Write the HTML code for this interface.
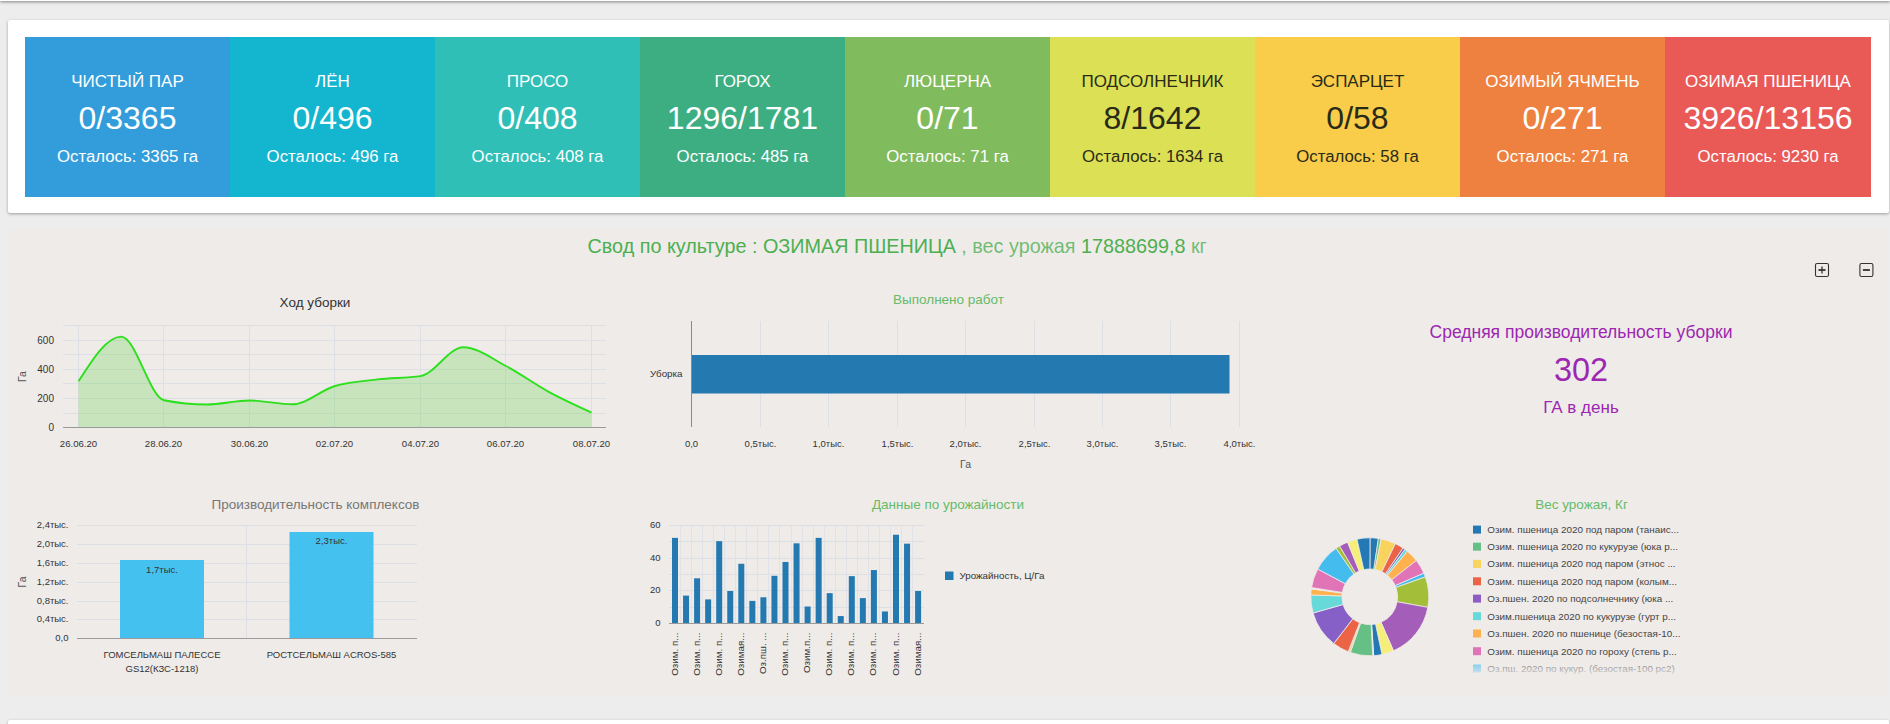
<!DOCTYPE html><html><head><meta charset="utf-8"><title>Dashboard</title><style>
html,body{margin:0;padding:0;}
body{width:1890px;height:724px;overflow:hidden;background:#ededed;position:relative;font-family:'Liberation Sans',sans-serif;}
.topcard{position:absolute;left:0;top:-40px;width:1890px;height:41px;background:#fff;box-shadow:0 1px 3px rgba(0,0,0,.45);}
.card{position:absolute;left:8px;top:20px;width:1881px;height:193px;background:#fff;border-radius:2px;box-shadow:0 1px 3px rgba(0,0,0,.35);}
.tiles{position:absolute;left:25px;top:37px;width:1846px;height:160px;display:flex;}
.tile{flex:0 0 205px;position:relative;color:#fff;text-align:center;}
.tile:last-child{flex-basis:206px;}
.tile div{position:absolute;left:0;right:0;white-space:nowrap;}
.t1{font-size:17px;line-height:17px;top:36px;}
.t2{font-size:32px;line-height:32px;top:65px;}
.t3{font-size:16.8px;line-height:17px;top:111px;}
.panel{position:absolute;left:8px;top:230px;width:1881px;height:467px;background:#efebe9;}
.botcard{position:absolute;left:8px;top:720px;width:1881px;height:60px;background:#fff;border-radius:2px;box-shadow:0 1px 3px rgba(0,0,0,.35);}
svg{position:absolute;left:0;top:0;}
svg text{font-family:'Liberation Sans',sans-serif;}

</style></head><body>
<div class="topcard"></div>
<div class="card"><div class="tiles" style="left:17px;top:17px">
<div class="tile" style="background:#339ddb;color:#fff"><div class="t1">ЧИСТЫЙ ПАР</div><div class="t2">0/3365</div><div class="t3">Осталось: 3365 га</div></div>
<div class="tile" style="background:#13b5cf;color:#fff"><div class="t1">ЛЁН</div><div class="t2">0/496</div><div class="t3">Осталось: 496 га</div></div>
<div class="tile" style="background:#2fbfb7;color:#fff"><div class="t1">ПРОСО</div><div class="t2">0/408</div><div class="t3">Осталось: 408 га</div></div>
<div class="tile" style="background:#3dae82;color:#fff"><div class="t1">ГОРОХ</div><div class="t2">1296/1781</div><div class="t3">Осталось: 485 га</div></div>
<div class="tile" style="background:#80bb5e;color:#fff"><div class="t1">ЛЮЦЕРНА</div><div class="t2">0/71</div><div class="t3">Осталось: 71 га</div></div>
<div class="tile" style="background:#dce054;color:#2a2a18"><div class="t1">ПОДСОЛНЕЧНИК</div><div class="t2">8/1642</div><div class="t3">Осталось: 1634 га</div></div>
<div class="tile" style="background:#f9cd4a;color:#2a2a18"><div class="t1">ЭСПАРЦЕТ</div><div class="t2">0/58</div><div class="t3">Осталось: 58 га</div></div>
<div class="tile" style="background:#ee8140;color:#fff"><div class="t1">ОЗИМЫЙ ЯЧМЕНЬ</div><div class="t2">0/271</div><div class="t3">Осталось: 271 га</div></div>
<div class="tile" style="background:#e95a57;color:#fff"><div class="t1">ОЗИМАЯ ПШЕНИЦА</div><div class="t2">3926/13156</div><div class="t3">Осталось: 9230 га</div></div>
</div></div>
<div class="panel"></div>
<div class="botcard"></div>
<svg width="1890" height="724" viewBox="0 0 1890 724">
<text x="587.5" y="252.5" font-size="19.8" fill="#4caf50"><tspan>Свод по культуре : ОЗИМАЯ ПШЕНИЦА</tspan><tspan fill-opacity="0.78"> , вес урожая </tspan><tspan>17888699,8</tspan><tspan fill-opacity="0.78"> кг</tspan></text>
<rect x="1815.5" y="263.5" width="13" height="13" rx="1.6" fill="none" stroke="#333" stroke-width="1.1"/>
<line x1="1818.5" y1="270" x2="1825.5" y2="270" stroke="#333" stroke-width="1.8"/>
<line x1="1822.0" y1="266.5" x2="1822.0" y2="273.5" stroke="#333" stroke-width="1.3"/>
<rect x="1859.9" y="263.5" width="13" height="13" rx="1.6" fill="none" stroke="#333" stroke-width="1.1"/>
<line x1="1862.9" y1="270" x2="1869.9" y2="270" stroke="#333" stroke-width="1.8"/>
<text x="315.00" y="307.00" font-size="13.5" fill="#333" text-anchor="middle" font-weight="400" >Ход уборки</text>
<line x1="63" y1="325.5" x2="606" y2="325.5" stroke="#dcdfe4" stroke-width="1"/>
<line x1="63" y1="340.5" x2="606" y2="340.5" stroke="#dcdfe4" stroke-width="1"/>
<line x1="63" y1="354.5" x2="606" y2="354.5" stroke="#dcdfe4" stroke-width="1"/>
<line x1="63" y1="369.5" x2="606" y2="369.5" stroke="#dcdfe4" stroke-width="1"/>
<line x1="63" y1="383.5" x2="606" y2="383.5" stroke="#dcdfe4" stroke-width="1"/>
<line x1="63" y1="398.5" x2="606" y2="398.5" stroke="#dcdfe4" stroke-width="1"/>
<line x1="63" y1="413.5" x2="606" y2="413.5" stroke="#dcdfe4" stroke-width="1"/>
<line x1="78.5" y1="325" x2="78.5" y2="427" stroke="#dcdfe4" stroke-width="1"/>
<line x1="163.5" y1="325" x2="163.5" y2="427" stroke="#dcdfe4" stroke-width="1"/>
<line x1="249.5" y1="325" x2="249.5" y2="427" stroke="#dcdfe4" stroke-width="1"/>
<line x1="334.5" y1="325" x2="334.5" y2="427" stroke="#dcdfe4" stroke-width="1"/>
<line x1="420.5" y1="325" x2="420.5" y2="427" stroke="#dcdfe4" stroke-width="1"/>
<line x1="505.5" y1="325" x2="505.5" y2="427" stroke="#dcdfe4" stroke-width="1"/>
<line x1="591.5" y1="325" x2="591.5" y2="427" stroke="#dcdfe4" stroke-width="1"/>
<path d="M78.50,381.30 C92.75,358.95 107.00,336.60 121.25,336.60 C135.50,336.60 149.75,397.33 164.00,400.20 C178.25,403.07 192.50,404.50 206.75,404.50 C221.00,404.50 235.25,400.50 249.50,400.50 C263.75,400.50 278.00,404.30 292.25,404.30 C306.50,404.30 320.75,390.15 335.00,386.00 C349.25,381.85 363.50,381.05 377.75,379.40 C392.00,377.75 406.25,378.30 420.50,376.10 C434.75,373.90 449.00,347.20 463.25,347.20 C477.50,347.20 491.75,358.57 506.00,366.00 C520.25,373.43 534.50,384.05 548.75,391.80 C563.00,399.55 577.25,406.02 591.50,412.50 L591.50,427.5 L78.50,427.5 Z" fill="#7fd66b" fill-opacity="0.35"/>
<path d="M78.50,381.30 C92.75,358.95 107.00,336.60 121.25,336.60 C135.50,336.60 149.75,397.33 164.00,400.20 C178.25,403.07 192.50,404.50 206.75,404.50 C221.00,404.50 235.25,400.50 249.50,400.50 C263.75,400.50 278.00,404.30 292.25,404.30 C306.50,404.30 320.75,390.15 335.00,386.00 C349.25,381.85 363.50,381.05 377.75,379.40 C392.00,377.75 406.25,378.30 420.50,376.10 C434.75,373.90 449.00,347.20 463.25,347.20 C477.50,347.20 491.75,358.57 506.00,366.00 C520.25,373.43 534.50,384.05 548.75,391.80 C563.00,399.55 577.25,406.02 591.50,412.50" fill="none" stroke="#2ddf1c" stroke-width="1.9"/>
<line x1="63" y1="427.5" x2="606" y2="427.5" stroke="#9a9a9a" stroke-width="1.1"/>
<text x="54.00" y="430.60" font-size="10" fill="#333" text-anchor="end" font-weight="400" >0</text>
<text x="54.00" y="401.60" font-size="10" fill="#333" text-anchor="end" font-weight="400" >200</text>
<text x="54.00" y="372.60" font-size="10" fill="#333" text-anchor="end" font-weight="400" >400</text>
<text x="54.00" y="343.60" font-size="10" fill="#333" text-anchor="end" font-weight="400" >600</text>
<text x="26.50" y="376.60" font-size="10.5" fill="#555" text-anchor="middle" font-weight="400" transform="rotate(-90 26.5 376.6)">Га</text>
<text x="78.50" y="447.00" font-size="9.6" fill="#333" text-anchor="middle" font-weight="400" >26.06.20</text>
<text x="163.50" y="447.00" font-size="9.6" fill="#333" text-anchor="middle" font-weight="400" >28.06.20</text>
<text x="249.50" y="447.00" font-size="9.6" fill="#333" text-anchor="middle" font-weight="400" >30.06.20</text>
<text x="334.50" y="447.00" font-size="9.6" fill="#333" text-anchor="middle" font-weight="400" >02.07.20</text>
<text x="420.50" y="447.00" font-size="9.6" fill="#333" text-anchor="middle" font-weight="400" >04.07.20</text>
<text x="505.50" y="447.00" font-size="9.6" fill="#333" text-anchor="middle" font-weight="400" >06.07.20</text>
<text x="591.50" y="447.00" font-size="9.6" fill="#333" text-anchor="middle" font-weight="400" >08.07.20</text>
<text x="948.50" y="304.00" font-size="13.5" fill="#66bb6a" text-anchor="middle" font-weight="400" >Выполнено работ</text>
<line x1="760.5" y1="321" x2="760.5" y2="427" stroke="#dcdfe4" stroke-width="1"/>
<line x1="828.5" y1="321" x2="828.5" y2="427" stroke="#dcdfe4" stroke-width="1"/>
<line x1="897.5" y1="321" x2="897.5" y2="427" stroke="#dcdfe4" stroke-width="1"/>
<line x1="965.5" y1="321" x2="965.5" y2="427" stroke="#dcdfe4" stroke-width="1"/>
<line x1="1034.5" y1="321" x2="1034.5" y2="427" stroke="#dcdfe4" stroke-width="1"/>
<line x1="1102.5" y1="321" x2="1102.5" y2="427" stroke="#dcdfe4" stroke-width="1"/>
<line x1="1170.5" y1="321" x2="1170.5" y2="427" stroke="#dcdfe4" stroke-width="1"/>
<line x1="1239.5" y1="321" x2="1239.5" y2="427" stroke="#dcdfe4" stroke-width="1"/>
<rect x="692" y="355" width="537.5" height="38.5" fill="#2479b1"/>
<line x1="691.5" y1="321" x2="691.5" y2="427" stroke="#8a8a8a" stroke-width="1"/>
<text x="682.50" y="377.00" font-size="9.8" fill="#333" text-anchor="end" font-weight="400" >Уборка</text>
<text x="691.50" y="447.00" font-size="9.5" fill="#333" text-anchor="middle" font-weight="400" >0,0</text>
<text x="760.50" y="447.00" font-size="9.5" fill="#333" text-anchor="middle" font-weight="400" >0,5тыс.</text>
<text x="828.50" y="447.00" font-size="9.5" fill="#333" text-anchor="middle" font-weight="400" >1,0тыс.</text>
<text x="897.50" y="447.00" font-size="9.5" fill="#333" text-anchor="middle" font-weight="400" >1,5тыс.</text>
<text x="965.50" y="447.00" font-size="9.5" fill="#333" text-anchor="middle" font-weight="400" >2,0тыс.</text>
<text x="1034.50" y="447.00" font-size="9.5" fill="#333" text-anchor="middle" font-weight="400" >2,5тыс.</text>
<text x="1102.50" y="447.00" font-size="9.5" fill="#333" text-anchor="middle" font-weight="400" >3,0тыс.</text>
<text x="1170.50" y="447.00" font-size="9.5" fill="#333" text-anchor="middle" font-weight="400" >3,5тыс.</text>
<text x="1239.50" y="447.00" font-size="9.5" fill="#333" text-anchor="middle" font-weight="400" >4,0тыс.</text>
<text x="965.50" y="468.00" font-size="10.5" fill="#555" text-anchor="middle" font-weight="400" >Га</text>
<text x="1581.00" y="337.80" font-size="17.5" fill="#9c27b0" text-anchor="middle" font-weight="400" >Средняя производительность уборки</text>
<text x="1581.00" y="381.00" font-size="32.4" fill="#9c27b0" text-anchor="middle" font-weight="400" >302</text>
<text x="1581.00" y="412.90" font-size="17" fill="#9c27b0" text-anchor="middle" font-weight="400" >ГА в день</text>
<text x="315.50" y="509.00" font-size="13.5" fill="#777" text-anchor="middle" font-weight="400" >Производительность комплексов</text>
<line x1="77" y1="619.5" x2="417" y2="619.5" stroke="#dcdfe4" stroke-width="1"/>
<line x1="77" y1="601.5" x2="417" y2="601.5" stroke="#dcdfe4" stroke-width="1"/>
<line x1="77" y1="582.5" x2="417" y2="582.5" stroke="#dcdfe4" stroke-width="1"/>
<line x1="77" y1="563.5" x2="417" y2="563.5" stroke="#dcdfe4" stroke-width="1"/>
<line x1="77" y1="544.5" x2="417" y2="544.5" stroke="#dcdfe4" stroke-width="1"/>
<line x1="77" y1="525.5" x2="417" y2="525.5" stroke="#dcdfe4" stroke-width="1"/>
<line x1="246.5" y1="525" x2="246.5" y2="638" stroke="#dcdfe4" stroke-width="1"/>
<rect x="120" y="560" width="84" height="78" fill="#45c1f0"/>
<rect x="289.5" y="532" width="84" height="106" fill="#45c1f0"/>
<line x1="77" y1="638.5" x2="417" y2="638.5" stroke="#9a9a9a" stroke-width="1.1"/>
<text x="162.00" y="572.70" font-size="9.5" fill="#333" text-anchor="middle" font-weight="400" >1,7тыс.</text>
<text x="331.50" y="544.20" font-size="9.5" fill="#333" text-anchor="middle" font-weight="400" >2,3тыс.</text>
<text x="68.50" y="641.30" font-size="9.5" fill="#333" text-anchor="end" font-weight="400" >0,0</text>
<text x="68.50" y="622.30" font-size="9.5" fill="#333" text-anchor="end" font-weight="400" >0,4тыс.</text>
<text x="68.50" y="604.30" font-size="9.5" fill="#333" text-anchor="end" font-weight="400" >0,8тыс.</text>
<text x="68.50" y="585.30" font-size="9.5" fill="#333" text-anchor="end" font-weight="400" >1,2тыс.</text>
<text x="68.50" y="566.30" font-size="9.5" fill="#333" text-anchor="end" font-weight="400" >1,6тыс.</text>
<text x="68.50" y="547.30" font-size="9.5" fill="#333" text-anchor="end" font-weight="400" >2,0тыс.</text>
<text x="68.50" y="528.30" font-size="9.5" fill="#333" text-anchor="end" font-weight="400" >2,4тыс.</text>
<text x="25.50" y="582.00" font-size="10.5" fill="#555" text-anchor="middle" font-weight="400" transform="rotate(-90 25.5 582)">Га</text>
<text x="162.00" y="658.00" font-size="9.5" fill="#333" text-anchor="middle" font-weight="400" >ГОМСЕЛЬМАШ ПАЛЕССЕ</text>
<text x="162.00" y="672.00" font-size="9.5" fill="#333" text-anchor="middle" font-weight="400" >GS12(КЗС-1218)</text>
<text x="331.50" y="658.00" font-size="9.5" fill="#333" text-anchor="middle" font-weight="400" >РОСТСЕЛЬМАШ ACROS-585</text>
<text x="948.00" y="509.00" font-size="13.5" fill="#66bb6a" text-anchor="middle" font-weight="400" >Данные по урожайности</text>
<line x1="669" y1="607.5" x2="924" y2="607.5" stroke="#dcdfe4" stroke-width="1"/>
<line x1="669" y1="590.5" x2="924" y2="590.5" stroke="#dcdfe4" stroke-width="1"/>
<line x1="669" y1="574.5" x2="924" y2="574.5" stroke="#dcdfe4" stroke-width="1"/>
<line x1="669" y1="558.5" x2="924" y2="558.5" stroke="#dcdfe4" stroke-width="1"/>
<line x1="669" y1="541.5" x2="924" y2="541.5" stroke="#dcdfe4" stroke-width="1"/>
<line x1="669" y1="525.5" x2="924" y2="525.5" stroke="#dcdfe4" stroke-width="1"/>
<line x1="680.5" y1="525" x2="680.5" y2="623" stroke="#e0e2e7" stroke-width="1"/>
<line x1="691.5" y1="525" x2="691.5" y2="623" stroke="#e0e2e7" stroke-width="1"/>
<line x1="702.5" y1="525" x2="702.5" y2="623" stroke="#e0e2e7" stroke-width="1"/>
<line x1="713.5" y1="525" x2="713.5" y2="623" stroke="#e0e2e7" stroke-width="1"/>
<line x1="724.5" y1="525" x2="724.5" y2="623" stroke="#e0e2e7" stroke-width="1"/>
<line x1="735.5" y1="525" x2="735.5" y2="623" stroke="#e0e2e7" stroke-width="1"/>
<line x1="746.5" y1="525" x2="746.5" y2="623" stroke="#e0e2e7" stroke-width="1"/>
<line x1="757.5" y1="525" x2="757.5" y2="623" stroke="#e0e2e7" stroke-width="1"/>
<line x1="768.5" y1="525" x2="768.5" y2="623" stroke="#e0e2e7" stroke-width="1"/>
<line x1="779.5" y1="525" x2="779.5" y2="623" stroke="#e0e2e7" stroke-width="1"/>
<line x1="791.5" y1="525" x2="791.5" y2="623" stroke="#e0e2e7" stroke-width="1"/>
<line x1="802.5" y1="525" x2="802.5" y2="623" stroke="#e0e2e7" stroke-width="1"/>
<line x1="813.5" y1="525" x2="813.5" y2="623" stroke="#e0e2e7" stroke-width="1"/>
<line x1="824.5" y1="525" x2="824.5" y2="623" stroke="#e0e2e7" stroke-width="1"/>
<line x1="835.5" y1="525" x2="835.5" y2="623" stroke="#e0e2e7" stroke-width="1"/>
<line x1="846.5" y1="525" x2="846.5" y2="623" stroke="#e0e2e7" stroke-width="1"/>
<line x1="857.5" y1="525" x2="857.5" y2="623" stroke="#e0e2e7" stroke-width="1"/>
<line x1="868.5" y1="525" x2="868.5" y2="623" stroke="#e0e2e7" stroke-width="1"/>
<line x1="879.5" y1="525" x2="879.5" y2="623" stroke="#e0e2e7" stroke-width="1"/>
<line x1="890.5" y1="525" x2="890.5" y2="623" stroke="#e0e2e7" stroke-width="1"/>
<line x1="901.5" y1="525" x2="901.5" y2="623" stroke="#e0e2e7" stroke-width="1"/>
<line x1="912.5" y1="525" x2="912.5" y2="623" stroke="#e0e2e7" stroke-width="1"/>
<rect x="672.00" y="537.88" width="6" height="85.62" fill="#2479b1"/>
<rect x="683.05" y="595.62" width="6" height="27.88" fill="#2479b1"/>
<rect x="694.10" y="578.30" width="6" height="45.20" fill="#2479b1"/>
<rect x="705.15" y="599.41" width="6" height="24.09" fill="#2479b1"/>
<rect x="716.20" y="541.18" width="6" height="82.32" fill="#2479b1"/>
<rect x="727.25" y="591.00" width="6" height="32.50" fill="#2479b1"/>
<rect x="738.30" y="563.78" width="6" height="59.72" fill="#2479b1"/>
<rect x="749.35" y="600.90" width="6" height="22.60" fill="#2479b1"/>
<rect x="760.40" y="597.27" width="6" height="26.23" fill="#2479b1"/>
<rect x="771.45" y="575.82" width="6" height="47.68" fill="#2479b1"/>
<rect x="782.50" y="561.97" width="6" height="61.53" fill="#2479b1"/>
<rect x="793.55" y="543.33" width="6" height="80.17" fill="#2479b1"/>
<rect x="804.60" y="606.51" width="6" height="16.99" fill="#2479b1"/>
<rect x="815.65" y="537.88" width="6" height="85.62" fill="#2479b1"/>
<rect x="826.70" y="593.15" width="6" height="30.35" fill="#2479b1"/>
<rect x="837.75" y="616.08" width="6" height="7.42" fill="#2479b1"/>
<rect x="848.80" y="576.15" width="6" height="47.35" fill="#2479b1"/>
<rect x="859.85" y="598.10" width="6" height="25.40" fill="#2479b1"/>
<rect x="870.90" y="570.05" width="6" height="53.45" fill="#2479b1"/>
<rect x="881.95" y="611.46" width="6" height="12.04" fill="#2479b1"/>
<rect x="893.00" y="534.75" width="6" height="88.75" fill="#2479b1"/>
<rect x="904.05" y="543.66" width="6" height="79.84" fill="#2479b1"/>
<rect x="915.10" y="591.00" width="6" height="32.50" fill="#2479b1"/>
<line x1="669" y1="623.5" x2="924" y2="623.5" stroke="#9a9a9a" stroke-width="1.1"/>
<text x="660.50" y="626.30" font-size="9.5" fill="#333" text-anchor="end" font-weight="400" >0</text>
<text x="660.50" y="593.30" font-size="9.5" fill="#333" text-anchor="end" font-weight="400" >20</text>
<text x="660.50" y="561.30" font-size="9.5" fill="#333" text-anchor="end" font-weight="400" >40</text>
<text x="660.50" y="528.30" font-size="9.5" fill="#333" text-anchor="end" font-weight="400" >60</text>
<text x="0.00" y="0.00" font-size="9.8" fill="#333" text-anchor="end" font-weight="400" transform="translate(677.50,632.5) rotate(-90)">Озим. п...</text>
<text x="0.00" y="0.00" font-size="9.8" fill="#333" text-anchor="end" font-weight="400" transform="translate(699.60,632.5) rotate(-90)">Озим. п...</text>
<text x="0.00" y="0.00" font-size="9.8" fill="#333" text-anchor="end" font-weight="400" transform="translate(721.70,632.5) rotate(-90)">Озим. п...</text>
<text x="0.00" y="0.00" font-size="9.8" fill="#333" text-anchor="end" font-weight="400" transform="translate(743.80,632.5) rotate(-90)">Озимая...</text>
<text x="0.00" y="0.00" font-size="9.8" fill="#333" text-anchor="end" font-weight="400" transform="translate(765.90,632.5) rotate(-90)">Оз.пш. ...</text>
<text x="0.00" y="0.00" font-size="9.8" fill="#333" text-anchor="end" font-weight="400" transform="translate(788.00,632.5) rotate(-90)">Озим. п...</text>
<text x="0.00" y="0.00" font-size="9.8" fill="#333" text-anchor="end" font-weight="400" transform="translate(810.10,632.5) rotate(-90)">Озим.п...</text>
<text x="0.00" y="0.00" font-size="9.8" fill="#333" text-anchor="end" font-weight="400" transform="translate(832.20,632.5) rotate(-90)">Озим. п...</text>
<text x="0.00" y="0.00" font-size="9.8" fill="#333" text-anchor="end" font-weight="400" transform="translate(854.30,632.5) rotate(-90)">Озим. п...</text>
<text x="0.00" y="0.00" font-size="9.8" fill="#333" text-anchor="end" font-weight="400" transform="translate(876.40,632.5) rotate(-90)">Озим. п...</text>
<text x="0.00" y="0.00" font-size="9.8" fill="#333" text-anchor="end" font-weight="400" transform="translate(898.50,632.5) rotate(-90)">Озим. п...</text>
<text x="0.00" y="0.00" font-size="9.8" fill="#333" text-anchor="end" font-weight="400" transform="translate(920.60,632.5) rotate(-90)">Озимая...</text>
<rect x="945" y="571.5" width="8.5" height="8.5" fill="#2479b1"/>
<text x="959.50" y="579.00" font-size="9.8" fill="#333" text-anchor="start" font-weight="400" >Урожайность, Ц/Га</text>
<text x="1581.50" y="509.00" font-size="13.5" fill="#66bb6a" text-anchor="middle" font-weight="400" >Вес урожая, Кг</text>
<path d="M1370.01,537.80 A59,59 0 0 1 1378.42,538.43 L1373.86,569.30 A27.8,27.8 0 0 0 1369.90,569.00 Z" fill="#2478b4" stroke="#efebe9" stroke-width="0.8"/>
<path d="M1378.42,538.43 A59,59 0 0 1 1381.16,538.90 L1375.15,569.52 A27.8,27.8 0 0 0 1373.86,569.30 Z" fill="#66bf84" stroke="#efebe9" stroke-width="0.8"/>
<path d="M1381.16,538.90 A59,59 0 0 1 1395.39,543.64 L1381.86,571.75 A27.8,27.8 0 0 0 1375.15,569.52 Z" fill="#f8d35e" stroke="#efebe9" stroke-width="0.8"/>
<path d="M1395.39,543.64 A59,59 0 0 1 1403.05,548.06 L1385.47,573.83 A27.8,27.8 0 0 0 1381.86,571.75 Z" fill="#ec6446" stroke="#efebe9" stroke-width="0.8"/>
<path d="M1403.05,548.06 A59,59 0 0 1 1404.98,549.43 L1386.38,574.48 A27.8,27.8 0 0 0 1385.47,573.83 Z" fill="#8e5cc4" stroke="#efebe9" stroke-width="0.8"/>
<path d="M1404.98,549.43 A59,59 0 0 1 1407.33,551.27 L1387.48,575.35 A27.8,27.8 0 0 0 1386.38,574.48 Z" fill="#68d9d9" stroke="#efebe9" stroke-width="0.8"/>
<path d="M1407.33,551.27 A59,59 0 0 1 1416.36,560.56 L1391.74,579.72 A27.8,27.8 0 0 0 1387.48,575.35 Z" fill="#ffb14e" stroke="#efebe9" stroke-width="0.8"/>
<path d="M1416.36,560.56 A59,59 0 0 1 1423.87,573.18 L1395.27,585.67 A27.8,27.8 0 0 0 1391.74,579.72 Z" fill="#e173b7" stroke="#efebe9" stroke-width="0.8"/>
<path d="M1423.87,573.18 A59,59 0 0 1 1425.35,576.91 L1395.97,587.43 A27.8,27.8 0 0 0 1395.27,585.67 Z" fill="#44bdee" stroke="#efebe9" stroke-width="0.8"/>
<path d="M1425.35,576.91 A59,59 0 0 1 1427.85,607.35 L1397.15,601.77 A27.8,27.8 0 0 0 1395.97,587.43 Z" fill="#a3bf3a" stroke="#efebe9" stroke-width="0.8"/>
<path d="M1427.85,607.35 A59,59 0 0 1 1393.51,650.82 L1380.97,622.26 A27.8,27.8 0 0 0 1397.15,601.77 Z" fill="#a45eb9" stroke="#efebe9" stroke-width="0.8"/>
<path d="M1393.51,650.82 A59,59 0 0 1 1381.97,654.53 L1375.53,624.00 A27.8,27.8 0 0 0 1380.97,622.26 Z" fill="#f5ee7a" stroke="#efebe9" stroke-width="0.8"/>
<path d="M1381.97,654.53 A59,59 0 0 1 1373.71,655.67 L1371.64,624.54 A27.8,27.8 0 0 0 1375.53,624.00 Z" fill="#2478b4" stroke="#efebe9" stroke-width="0.8"/>
<path d="M1373.71,655.67 A59,59 0 0 1 1372.68,655.73 L1371.16,624.57 A27.8,27.8 0 0 0 1371.64,624.54 Z" fill="#efebe9" stroke="#efebe9" stroke-width="0.8"/>
<path d="M1372.68,655.73 A59,59 0 0 1 1350.30,652.48 L1360.61,623.04 A27.8,27.8 0 0 0 1371.16,624.57 Z" fill="#66bf84" stroke="#efebe9" stroke-width="0.8"/>
<path d="M1350.30,652.48 A59,59 0 0 1 1348.18,651.69 L1359.61,622.67 A27.8,27.8 0 0 0 1360.61,623.04 Z" fill="#f0d0b0" stroke="#efebe9" stroke-width="0.8"/>
<path d="M1348.18,651.69 A59,59 0 0 1 1333.72,643.48 L1352.80,618.80 A27.8,27.8 0 0 0 1359.61,622.67 Z" fill="#ec6446" stroke="#efebe9" stroke-width="0.8"/>
<path d="M1333.72,643.48 A59,59 0 0 1 1313.09,613.06 L1343.08,604.46 A27.8,27.8 0 0 0 1352.80,618.80 Z" fill="#8660c7" stroke="#efebe9" stroke-width="0.8"/>
<path d="M1313.09,613.06 A59,59 0 0 1 1310.83,594.95 L1342.01,595.93 A27.8,27.8 0 0 0 1343.08,604.46 Z" fill="#68d9d9" stroke="#efebe9" stroke-width="0.8"/>
<path d="M1310.83,594.95 A59,59 0 0 1 1311.33,588.89 L1342.25,593.08 A27.8,27.8 0 0 0 1342.01,595.93 Z" fill="#ffb14e" stroke="#efebe9" stroke-width="0.8"/>
<path d="M1311.33,588.89 A59,59 0 0 1 1311.53,587.57 L1342.34,592.45 A27.8,27.8 0 0 0 1342.25,593.08 Z" fill="#efebe9" stroke="#efebe9" stroke-width="0.8"/>
<path d="M1311.53,587.57 A59,59 0 0 1 1317.75,569.01 L1345.28,583.71 A27.8,27.8 0 0 0 1342.34,592.45 Z" fill="#e173b7" stroke="#efebe9" stroke-width="0.8"/>
<path d="M1317.75,569.01 A59,59 0 0 1 1336.13,548.35 L1353.93,573.97 A27.8,27.8 0 0 0 1345.28,583.71 Z" fill="#44bdee" stroke="#efebe9" stroke-width="0.8"/>
<path d="M1336.13,548.35 A59,59 0 0 1 1339.68,546.07 L1355.61,572.90 A27.8,27.8 0 0 0 1353.93,573.97 Z" fill="#a3bf3a" stroke="#efebe9" stroke-width="0.8"/>
<path d="M1339.68,546.07 A59,59 0 0 1 1347.60,542.13 L1359.34,571.04 A27.8,27.8 0 0 0 1355.61,572.90 Z" fill="#a45eb9" stroke="#efebe9" stroke-width="0.8"/>
<path d="M1347.60,542.13 A59,59 0 0 1 1357.03,539.20 L1363.78,569.66 A27.8,27.8 0 0 0 1359.34,571.04 Z" fill="#f5ee7a" stroke="#efebe9" stroke-width="0.8"/>
<path d="M1357.03,539.20 A59,59 0 0 1 1370.01,537.80 L1369.90,569.00 A27.8,27.8 0 0 0 1363.78,569.66 Z" fill="#2478b4" stroke="#efebe9" stroke-width="0.8"/>
<defs><linearGradient id="fade" x1="0" y1="0" x2="0" y2="1"><stop offset="0" stop-color="#efebe9" stop-opacity="0.2"/><stop offset="1" stop-color="#efebe9" stop-opacity="1"/></linearGradient></defs>
<rect x="1473" y="525.6" width="8" height="8" fill="#2478b4"/>
<text x="1487.30" y="533.00" font-size="9.9" fill="#444" text-anchor="start" font-weight="400" >Озим. пшеница 2020 под паром (танаис...</text>
<rect x="1473" y="542.7" width="8" height="8" fill="#66bf84"/>
<text x="1487.30" y="550.10" font-size="9.9" fill="#444" text-anchor="start" font-weight="400" >Озим. пшеница 2020 по кукурузе (юка р...</text>
<rect x="1473" y="559.9" width="8" height="8" fill="#f8d35e"/>
<text x="1487.30" y="567.30" font-size="9.9" fill="#444" text-anchor="start" font-weight="400" >Озим. пшеница 2020 под паром (этнос ...</text>
<rect x="1473" y="577.3" width="8" height="8" fill="#ec6446"/>
<text x="1487.30" y="584.70" font-size="9.9" fill="#444" text-anchor="start" font-weight="400" >Озим. пшеница 2020 под паром (колым...</text>
<rect x="1473" y="594.6" width="8" height="8" fill="#8e5cc4"/>
<text x="1487.30" y="602.00" font-size="9.9" fill="#444" text-anchor="start" font-weight="400" >Оз.пшен. 2020 по подсолнечнику (юка ...</text>
<rect x="1473" y="612.2" width="8" height="8" fill="#68d9d9"/>
<text x="1487.30" y="619.60" font-size="9.9" fill="#444" text-anchor="start" font-weight="400" >Озим.пшеница 2020 по кукурузе (гурт р...</text>
<rect x="1473" y="629.5" width="8" height="8" fill="#ffb14e"/>
<text x="1487.30" y="636.90" font-size="9.9" fill="#444" text-anchor="start" font-weight="400" >Оз.пшен. 2020 по пшенице (безостая-10...</text>
<rect x="1473" y="647.2" width="8" height="8" fill="#e173b7"/>
<text x="1487.30" y="654.60" font-size="9.9" fill="#444" text-anchor="start" font-weight="400" >Озим. пшеница 2020 по гороху (степь р...</text>
<rect x="1473" y="664.5" width="8" height="8" fill="#44bdee"/>
<text x="1487.30" y="671.90" font-size="9.9" fill="#444" text-anchor="start" font-weight="400" >Оз.пш. 2020 по кукур. (безостая-100 рс2)</text>
<rect x="1465" y="660" width="250" height="18" fill="url(#fade)"/>
</svg>
</body></html>
